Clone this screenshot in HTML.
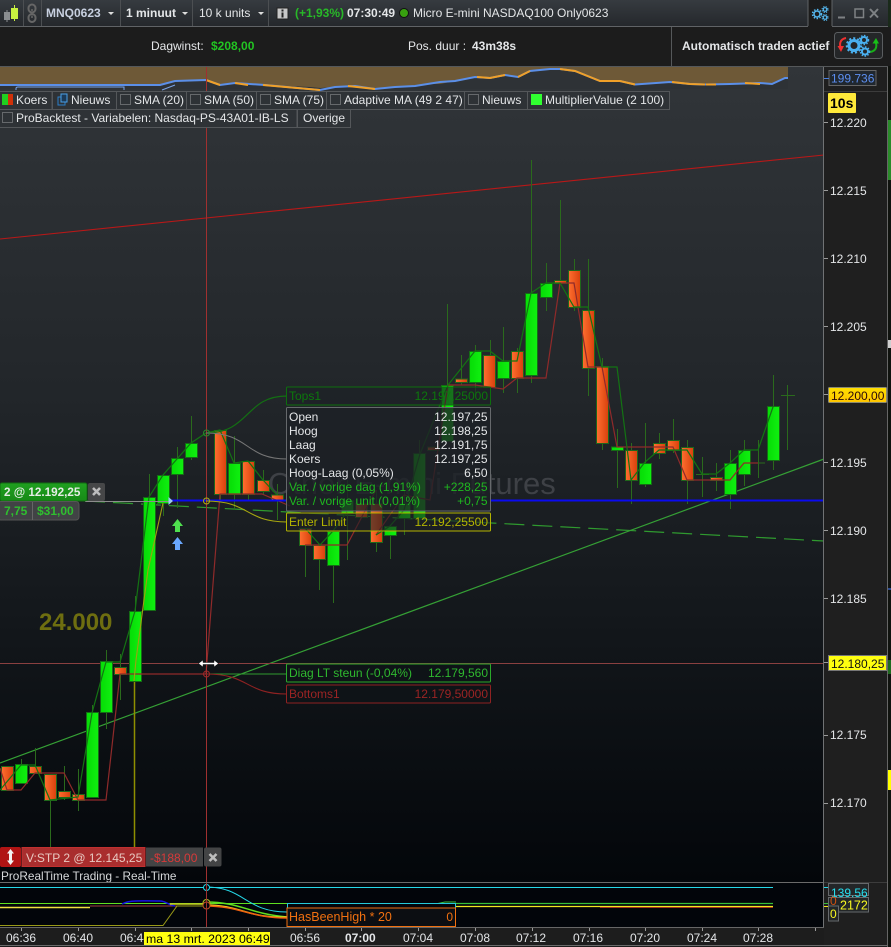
<!DOCTYPE html>
<html><head><meta charset="utf-8"><title>MNQ0623</title>
<style>
html,body{margin:0;padding:0;background:#1d1d1d;width:891px;height:947px;overflow:hidden}
svg{display:block;position:absolute;left:0;top:0}
text{font-family:"Liberation Sans",sans-serif;font-size:12px;fill:#e4e6e8}
.b{font-weight:bold}
.r{fill:url(#gr);stroke:#1f661a;stroke-width:1}
.g{fill:url(#gg);stroke:#156c15;stroke-width:1}
.lb{fill:#2e3236;stroke:#54575a;stroke-width:1}
.cb{fill:none;stroke:#66696c}
.m{text-anchor:end}
.tick{stroke:#9a9a9a;stroke-width:1}
</style></head><body>
<svg width="891" height="947" viewBox="0 0 891 947" xmlns="http://www.w3.org/2000/svg">
<defs>
<linearGradient id="gr" x1="0" x2="1" y1="0" y2="0"><stop offset="0" stop-color="#ff6f30"/><stop offset="1" stop-color="#d8400c"/></linearGradient>
<linearGradient id="gg" x1="0" x2="1" y1="0" y2="0"><stop offset="0" stop-color="#06dc06"/><stop offset="1" stop-color="#10f010"/></linearGradient>
<linearGradient id="bg" x1="0" x2="0" y1="0" y2="1"><stop offset="0" stop-color="#313539"/><stop offset=".4" stop-color="#22262a"/><stop offset=".7" stop-color="#12161a"/><stop offset="1" stop-color="#03060a"/></linearGradient>
<linearGradient id="top" x1="0" x2="0" y1="0" y2="1"><stop offset="0" stop-color="#363b40"/><stop offset="1" stop-color="#24272b"/></linearGradient>
<linearGradient id="gl" x1="0" x2="0" y1="0" y2="1"><stop offset="0" stop-color="#20a020"/><stop offset="1" stop-color="#178a17"/></linearGradient>
<linearGradient id="rl" x1="0" x2="0" y1="0" y2="1"><stop offset="0" stop-color="#c02020"/><stop offset="1" stop-color="#8f1f1f"/></linearGradient>
<linearGradient id="yl" x1="0" x2="0" y1="0" y2="1"><stop offset="0" stop-color="#ffe000"/><stop offset="1" stop-color="#ffc400"/></linearGradient>
</defs>

<!-- base -->
<rect width="891" height="947" fill="#1d1d1d"/>

<!-- chart bg -->
<rect x="0" y="67" width="824" height="816" fill="url(#bg)"/>

<!-- mini chart strip -->
<rect x="0" y="67" width="788" height="22" fill="#6e5937"/>
<path d="M0 86H160L175 81.500 206 80 220 85 235 83 265 85 310 87 320 88 335 87 355 86 375 89 395 87 415 86 425 84 440 84 475 77 490 78 505 75 518 77 530 71 550 69 560 69 575 71 600 81 620 81 635 84.500 670 82 690 84 705 84.500 730 84 760 83 772 84 785 78 788 78V89H0Z" fill="#2e3236"/>
<path d="M0 85H160L175 81 206 80 220 85 235 83 265 85 320 90 335 87 355 86 375 89 395 87 415 86 440 82 455 81 475 77 490 78 505 75 518 77 530 71 550 69 560 69 575 71 600 81 620 81 635 84.500 670 82 690 84 705 84.500 730 84 760 83 772 84 785 78 788 78" fill="none" stroke="#5b8fe8" stroke-width="2"/>
<path d="M206 80L220 85M235 83L248 85M263 85L320 90M348 86L375 89M477 77L490 78 505 75M518 77L530 71M560 69L575 71 600 81 620 81 635 84.500M672 82L690 84 705 84.500M706 84.500H716M745 83L760 84" fill="none" stroke="#f0a028" stroke-width="2"/>
<path d="M16 90V88.500Q16 87 18 87H124V90M162 90L175 85" fill="none" stroke="#7aa4e8" stroke-width="1"/>

<!-- watermark -->
<text x="268" y="494" style="font-size:31px;fill:#3e4146">Other E-mini Futures</text>

<!-- trend lines under -->
<path d="M0 239L824 155" stroke="#b81818" stroke-width="1.100" fill="none"/>
<path d="M85 501L824 541" stroke="#2f9a2f" stroke-width="1.200" fill="none" stroke-dasharray="20 8"/>
<path d="M0 763L824 459" stroke="#35a035" stroke-width="1.200" fill="none"/>
<path d="M0 663.500H824" stroke="#8a4040" stroke-width="1"/>
<path d="M134.500 681V847" stroke="#8f8f00" stroke-width="1.500"/>

<!-- wicks -->
<path d="M7.500 790V766M21.500 759V783M35.500 748V773M50.500 800V847M64.500 766V800M78.500 769V811M92.500 705V730M106.500 650V729M120.500 654V700M135.500 596V611M149.500 474V497M163.500 474V516M177.500 447V508M191.500 416V460M220.500 430V500M234.500 436V510M248.500 461V500M263.500 470V495M277.500 484V520M305.500 545V577M319.500 559V590M333.500 565V603M347.500 480V560M376.500 490V552M390.500 535V559M404.500 490V535M419.500 440V525M447.500 304V415M461.500 355V385M475.500 345V395M490.500 340V396M503.500 327V393M517.500 348V393M531.500 160V383M546.500 263V311M560.500 200V283M574.500 259V311M588.500 259V396M602.500 358V450M617.500 429V488M631.500 443V504M645.500 423V487M659.500 433V459M673.500 419V453M687.500 440V504M702.500 457V497M716.500 463V491M730.500 450V509M744.500 440V486M758.500 440V478M773.500 375V470M787.500 385V450M752 463H765M781 395.500H795M696 474.500H709" stroke="#2a6a1c" stroke-width="1" fill="none"/>

<!-- candles -->
<rect class="r" x="1.500" y="766.500" width="12" height="24"/>
<rect class="g" x="15.500" y="764.500" width="12" height="19"/>
<rect class="r" x="29.500" y="766.500" width="12" height="7"/>
<rect class="r" x="44.500" y="774.500" width="12" height="26"/>
<rect class="r" x="58.500" y="791.500" width="12" height="6"/>
<rect class="r" x="72.500" y="794.500" width="12" height="6"/>
<rect class="g" x="86.500" y="712.500" width="12" height="85"/>
<rect class="g" x="100.500" y="661.500" width="12" height="51"/>
<rect class="r" x="114.500" y="667.500" width="12" height="7"/>
<rect class="g" x="129.500" y="611.500" width="12" height="70"/>
<rect class="g" x="143.500" y="497.500" width="12" height="113"/>
<rect class="g" x="157.500" y="475.500" width="12" height="28"/>
<rect class="g" x="171.500" y="458.500" width="12" height="16"/>
<rect class="g" x="185.500" y="443.500" width="12" height="14"/>
<rect class="r" x="214.500" y="430.500" width="12" height="64"/>
<rect class="g" x="228.500" y="463.500" width="12" height="31"/>
<rect class="r" x="242.500" y="461.500" width="12" height="33"/>
<rect class="r" x="257.500" y="480.500" width="12" height="11"/>
<rect class="r" x="271.500" y="495" width="12" height="5"/>
<rect class="r" x="299.500" y="528.500" width="12" height="17"/>
<rect class="r" x="313.500" y="545.500" width="12" height="14"/>
<rect class="g" x="327.500" y="531.500" width="12" height="34"/>
<rect class="g" x="341.500" y="500.500" width="12" height="13"/>
<rect class="r" x="355.500" y="503.500" width="12" height="14"/>
<rect class="r" x="370.500" y="503.500" width="12" height="39"/>
<rect class="g" x="384.500" y="526.500" width="12" height="9"/>
<rect class="g" x="398.500" y="503.500" width="12" height="15"/>
<rect class="g" x="413.500" y="453.500" width="12" height="65"/>
<rect class="r" x="427.500" y="447" width="12" height="3.500"/>
<rect class="g" x="441.500" y="385.500" width="12" height="56"/>
<rect class="r" x="455.500" y="379" width="12" height="3.500"/>
<rect class="g" x="469.500" y="351.500" width="12" height="31"/>
<rect class="r" x="483.500" y="355.500" width="12" height="32"/>
<rect class="g" x="497.500" y="361.500" width="12" height="17"/>
<rect class="r" x="511.500" y="351.500" width="12" height="27"/>
<rect class="g" x="525.500" y="293.500" width="12" height="82"/>
<rect class="g" x="540.500" y="283.500" width="12" height="14"/>
<rect class="r" x="554.500" y="280.500" width="12" height="3"/>
<rect class="r" x="568.500" y="270.500" width="12" height="37"/>
<rect class="r" x="582.500" y="310.500" width="12" height="58"/>
<rect class="r" x="596.500" y="366.500" width="12" height="77"/>
<rect class="g" x="611.500" y="447" width="12" height="3.500"/>
<rect class="r" x="625.500" y="450.500" width="12" height="30"/>
<rect class="g" x="639.500" y="463.500" width="12" height="21"/>
<rect class="r" x="653.500" y="443.500" width="12" height="10"/>
<rect class="r" x="667.500" y="440.500" width="12" height="10"/>
<rect class="r" x="681.500" y="447.500" width="12" height="33"/>
<rect class="r" x="710.500" y="477.500" width="12" height="3"/>
<rect class="g" x="724.500" y="463.500" width="12" height="31"/>
<rect class="g" x="738.500" y="450.500" width="12" height="24"/>
<rect class="g" x="767.500" y="406.500" width="12" height="54"/>

<!-- red low line -->
<path d="M0 768L7 790H21L35 773H64L78 800H106L120 674H206L220 494H262L290 506M305 545L319 545H347L376 490M376 535L404 495 430 500 448 385H475L503 389 517 378H546L560 283H574L588 367 602 367 617 447H673L687 480H730L744 463H758" fill="none" stroke="#8f2a2a" stroke-width="1.200"/>
<!-- green high line -->
<path d="M0 790L21 765H35L50 800 78 797 92 713 106 662H120L135 611 149 497 163 475 177 459 191 443 206 433 220 430 234 463 248 461 263 480 277 495M305 528L320 545 333 531 347 512M376 535L390 526 404 510 420 454 448 385 475 351 490 351 503 361H517L531 293 546 283H560L574 307 588 307 602 367H617L631 480 645 462 659 450H673L687 450 702 474H716L730 463 744 450H758L773 407" fill="none" stroke="#137313" stroke-width="1.200"/>
<!-- yellow order line -->
<path d="M163 503L148 570 136 660 134 681" fill="none" stroke="#a0a010" stroke-width="1.100"/>

<!-- price line -->
<path d="M85 501.500H170" stroke="#8c8c8c" stroke-width="1"/>
<path d="M170 500.500H287M490 500.500H824" stroke="#0a0af0" stroke-width="2"/>
<path d="M168.500 497V505L173 501Z" fill="#9cc8f0"/>

<!-- arrows -->
<path d="M177.500 519L183 526H180V532H175V526H172Z" fill="#4fe04f"/>
<path d="M177.500 537L183 544H180V550H175V544H172Z" fill="#6aa8ff"/>

<!-- crosshair -->
<path d="M206.500 67V934" stroke="#a03030" stroke-width="1" />
<path d="M206 674H287" stroke="#2f9a2f" fill="none" stroke-width="1"/>
<path d="M206 433C250 433 245 396 287 396" stroke="#136f13" fill="none" stroke-width="1.200"/>
<path d="M206 433C250 433 245 459 287 459" stroke="#777" fill="none" stroke-width="1"/>
<path d="M206 501C250 501 245 522 287 522" stroke="#a8a810" fill="none" stroke-width="1.100"/>
<path d="M206 674C250 674 245 694 287 694" stroke="#8f2222" fill="none" stroke-width="1.100"/>
<circle cx="206.500" cy="433" r="3" fill="none" stroke="#2a8a2a"/>
<circle cx="206.500" cy="501" r="3" fill="none" stroke="#b0b010"/>
<circle cx="206.500" cy="674" r="3" fill="none" stroke="#a02828"/>

<!-- resize cursor -->
<path d="M198.500 663.500L203 660V662.500H214V660L218.500 663.500 214 667V664.500H203V667Z" fill="#fff" stroke="#111" stroke-width=".5"/>

<!-- 24.000 -->
<text x="39" y="630" class="b" style="font-size:24px;fill:#6e6e10">24.000</text>

<!-- order tags -->
<rect x="0" y="483" width="87" height="18" rx="2" fill="url(#gl)" stroke="#116e11"/>
<text x="4" y="496" class="b" style="fill:#e6ece6;font-size:11.700px">2 @ 12.192,25</text>
<rect x="88" y="483" width="17" height="18" rx="2" fill="#464748"/>
<path d="M93 488L100 495M100 488L93 495" stroke="#bdbdbd" stroke-width="2.600"/>
<rect x="-2" y="501.500" width="81" height="18.500" rx="3" fill="#414345" stroke="#555"/>
<path d="M32.500 502V520" stroke="#666"/>
<text x="4" y="515" class="b" style="fill:#2fbf2f">7,75</text>
<text x="37" y="515" class="b" style="fill:#2fbf2f">$31,00</text>

<rect x="0" y="847" width="21" height="20" rx="2" fill="#b01414"/>
<path d="M10.500 849L14 853.500H12V860.500H14L10.500 865 7 860.500H9V853.500H7Z" fill="#f2f2f2"/>
<rect x="22" y="847.500" width="123" height="19" fill="#a92e2e" stroke="#c23030"/>
<text x="26" y="862" style="fill:#e8c8c0">V:STP  2 @ 12.145,25</text>
<rect x="146" y="847.500" width="57" height="19" fill="#434445" />
<text x="150" y="862" style="fill:#d83a3a">-$188,00</text>
<rect x="204" y="847.500" width="17.500" height="19" rx="2" fill="#434445"/>
<path d="M209.500 854L216.500 861M216.500 854L209.500 861" stroke="#bdbdbd" stroke-width="2.600"/>
<text x="1" y="880" style="font-size:11.800px;fill:#d6d8da">ProRealTime Trading - Real-Time</text>

<!-- tooltip labels -->
<rect x="286.500" y="387" width="204" height="18" rx="1" fill="#1d2226" fill-opacity=".6" stroke="#0d6e0d"/>
<text x="289" y="400" style="fill:#0c780c">Tops1</text>
<text x="488" y="400" class="m" style="fill:#0c780c">12.197,25000</text>

<rect x="286.500" y="407.500" width="204" height="103.500" rx="1" fill="#1d2125" fill-opacity=".8" stroke="#66696c"/>
<text x="289" y="421">Open</text><text x="487.500" y="421" class="m">12.197,25</text>
<text x="289" y="435">Hoog</text><text x="487.500" y="435" class="m">12.198,25</text>
<text x="289" y="449">Laag</text><text x="487.500" y="449" class="m">12.191,75</text>
<text x="289" y="463">Koers</text><text x="487.500" y="463" class="m">12.197,25</text>
<text x="289" y="477">Hoog-Laag (0,05%)</text><text x="487.500" y="477" class="m">6,50</text>
<text x="289" y="491" style="fill:#1fb81f">Var. / vorige dag (1,91%)</text><text x="487.500" y="491" class="m" style="fill:#1fb81f">+228,25</text>
<text x="289" y="505" style="fill:#1fb81f">Var. / vorige unit (0,01%)</text><text x="487.500" y="505" class="m" style="fill:#1fb81f">+0,75</text>

<rect x="286.500" y="513" width="204" height="18" rx="1" fill="#1c2024" fill-opacity=".6" stroke="#b4b400"/>
<text x="289" y="526" style="fill:#b4b400">Enter Limit</text>
<text x="488" y="526" class="m" style="fill:#b4b400">12.192,25500</text>

<rect x="286.500" y="664" width="204" height="18" rx="1" fill="#0e1317" stroke="#2aa82a"/>
<text x="289" y="677" style="fill:#2fb82f">Diag LT steun (-0,04%)</text>
<text x="488" y="677" class="m" style="fill:#2fb82f">12.179,560</text>
<rect x="286.500" y="685" width="204" height="18" rx="1" fill="#0e1317" stroke="#8f2222"/>
<text x="289" y="698" style="fill:#9c2424">Bottoms1</text>
<text x="488" y="698" class="m" style="fill:#9c2424">12.179,50000</text>

<!-- legend row 1 -->
<rect class="lb" x="-1" y="91.500" width="53" height="18"/>
<rect x="2" y="94" width="6" height="11" fill="#20d020"/><rect x="8" y="94" width="5" height="11" fill="#d03008"/>
<text x="16" y="104">Koers</text>
<rect class="lb" x="52.500" y="91.500" width="64" height="18"/>
<rect x="58" y="97" width="7" height="8" fill="none" stroke="#2b7fc9"/><rect x="61" y="94" width="6" height="8" fill="#1b3a58" stroke="#4aa0e8"/>
<text x="71" y="104">Nieuws</text>
<rect class="lb" x="116.500" y="91.500" width="70" height="18"/>
<rect class="cb" x="120.500" y="94.500" width="10" height="10"/><text x="134" y="104">SMA (20)</text>
<rect class="lb" x="186.500" y="91.500" width="70" height="18"/>
<rect class="cb" x="190.500" y="94.500" width="10" height="10"/><text x="204" y="104">SMA (50)</text>
<rect class="lb" x="256.500" y="91.500" width="70" height="18"/>
<rect class="cb" x="260.500" y="94.500" width="10" height="10"/><text x="274" y="104">SMA (75)</text>
<rect class="lb" x="326.500" y="91.500" width="138" height="18"/>
<rect class="cb" x="330.500" y="94.500" width="10" height="10"/><text x="344" y="104">Adaptive MA (49 2 47)</text>
<rect class="lb" x="464.500" y="91.500" width="63" height="18"/>
<rect class="cb" x="468.500" y="94.500" width="10" height="10"/><text x="482" y="104">Nieuws</text>
<rect class="lb" x="527.500" y="91.500" width="142" height="18"/>
<rect x="531" y="94" width="11" height="11" fill="#30ff30"/><text x="545" y="104">MultiplierValue (2 100)</text>
<!-- legend row 2 -->
<rect class="lb" x="-1" y="109.500" width="298" height="18"/>
<rect class="cb" x="2.500" y="112.500" width="10" height="10"/>
<text x="16" y="122">ProBacktest - Variabelen: Nasdaq-PS-43A01-IB-LS</text>
<rect class="lb" x="297.500" y="109.500" width="53" height="18"/>
<text x="303" y="122">Overige</text>

<!-- indicator panel -->
<rect x="0" y="883" width="824" height="45" fill="#02050a"/>
<path d="M0 882.500H824" stroke="#6a6a6a"/>
<path d="M0 887.500H773" stroke="#25d8e8" stroke-width="1"/>
<path d="M0 903.500H287" stroke="#5fe020" stroke-width="1"/>
<path d="M0 907.500H90" stroke="#f0e040" stroke-width="1.400"/>
<path d="M90 906H206" stroke="#a04040" stroke-width="1"/>
<path d="M122 904C130 900 135 901 160 901 166 901 168 905 175 906" stroke="#1414e8" fill="none" stroke-width="1.500"/>
<path d="M0 925.500H163L177 906H206" stroke="#9a9a18" fill="none" stroke-width="1"/>
<path d="M170 904H206" stroke="#c8d020" stroke-width="1.500"/>
<path d="M206 887C245 887 245 912 287 912" stroke="#25d8e8" fill="none"/>
<path d="M206 902C240 902 250 914 287 917" stroke="#60e020" fill="none" stroke-width="1.500"/>
<path d="M206 905C240 905 250 919 287 917" stroke="#f0d020" fill="none" stroke-width="1.500"/>
<path d="M206 906C240 906 250 918 287 918" stroke="#f06010" fill="none" stroke-width="1.500"/>
<path d="M456 903.500H773" stroke="#38c038" stroke-width="1.300"/>
<path d="M456 906.500H773" stroke="#f0e820" stroke-width="1.300"/>
<path d="M600 907.500H773" stroke="#d04020" stroke-width=".8"/>
<path d="M438 903.500L445 902H456" stroke="#38c038" fill="none"/>
<circle cx="206.500" cy="887.500" r="3" fill="#02050a" stroke="#25d8e8"/>
<circle cx="206.500" cy="903" r="3.500" fill="#02050a" stroke="#b0c020"/>
<circle cx="206.500" cy="905.500" r="3.500" fill="#02050a" stroke="#c05020"/>
<path d="M206.500 883V934" stroke="#a03030"/>
<rect x="287.500" y="903.500" width="168" height="5" fill="#02050a" stroke="#25c8d8"/>
<rect x="287" y="908" width="168.500" height="18.500" fill="#0c0e12" stroke="#f07010"/>
<text x="289" y="921" style="fill:#f07010;font-size:12.500px">HasBeenHigh * 20</text>
<text x="453" y="921" class="m" style="fill:#f07010">0</text>

<!-- axis structure -->
<path d="M823.500 27V928" stroke="#707274"/>
<rect x="824" y="67" width="64" height="880" fill="#1f1f1f"/>
<path d="M823.500 67V928" stroke="#707274"/>
<path d="M824 91.500H888M824 882.500H888" stroke="#3c3c3c"/>
<path d="M887.500 27V947" stroke="#666"/>
<rect x="888" y="27" width="3" height="920" fill="#10130f"/>
<rect x="888" y="120" width="3" height="60" fill="#2a8a2a"/>
<rect x="888" y="340" width="3" height="8" fill="#cfcfcf"/>
<rect x="888" y="660" width="3" height="14" fill="#1f6a1f"/>
<rect x="888" y="770" width="3" height="20" fill="#ffff00"/>
<rect x="888" y="588" width="3" height="2" fill="#2a4a90"/>

<!-- price axis -->
<path class="tick" d="M824 122.500h4M824 190.500h4M824 258.500h4M824 326.500h4M824 394.500h4M824 462.500h4M824 530.500h4M824 598.500h4M824 662.500h4M824 735.500h4M824 803.500h4"/>
<text x="830" y="127">12.220</text><text x="830" y="195">12.215</text><text x="830" y="263">12.210</text><text x="830" y="331">12.205</text><text x="830" y="467">12.195</text><text x="830" y="535">12.190</text><text x="830" y="603">12.185</text><text x="830" y="739">12.175</text><text x="830" y="807">12.170</text>

<rect x="828.500" y="387.500" width="58" height="15" rx="1" fill="url(#yl)" stroke="#8a8a70"/>
<text x="831" y="400" style="fill:#2a0808">12.200,00</text>
<rect x="828.500" y="655.500" width="58" height="15" fill="#ffff10" stroke="#777"/>
<text x="831" y="668" style="fill:#111">12.180,25</text>

<rect x="829" y="70.500" width="47" height="15" fill="#20272e" stroke="#666"/>
<path d="M824 78.500H829" stroke="#4a80e0"/>
<text x="831" y="82.500" style="fill:#5c8ef0">199.736</text>
<rect x="828" y="93" width="28" height="20" rx="1" fill="#ffe93a"/>
<text x="830" y="108" class="b" style="fill:#000;font-size:14px">10s</text>

<!-- bottom panel labels -->
<path d="M824 887.500H829" stroke="#25d8e8"/>
<path d="M824 903.500H829" stroke="#38c038"/><path d="M824 906.500H829" stroke="#f0e820"/>
<rect x="828.500" y="883.500" width="40" height="12" fill="#232628" stroke="#66696c"/>
<text x="831" y="897" style="fill:#25e0f0">139.56</text>
<rect x="828.500" y="897.500" width="40" height="14.500" fill="#232628" stroke="#66696c"/>
<text x="840" y="909.500" style="fill:#f8f820;font-size:12.500px">2172</text>
<text x="830" y="905" style="fill:#d05010">0</text>
<rect x="828.500" y="906" width="10" height="15" fill="#232628" stroke="#66696c"/>
<text x="830" y="918" style="fill:#f8f820">0</text>

<!-- time axis -->
<rect x="0" y="928" width="824" height="19" fill="#1d1d1d"/>
<path d="M0 927.500H824" stroke="#666"/>
<path d="M0 945.500H888" stroke="#6a6a6a"/>
<path class="tick" d="M21.500 928v3M78.500 928v3M135.500 928v3M191.500 928v3M248.500 928v3M305.500 928v3M361.500 928v3M418.500 928v3M475.500 928v3M532.500 928v3M589.500 928v3M645.500 928v3M702.500 928v3M758.500 928v3M815.500 928v3"/>
<text x="6" y="942">06:36</text><text x="63" y="942">06:40</text><text x="120" y="942">06:44</text>
<text x="290" y="942">06:56</text><text x="345" y="942" class="b">07:00</text><text x="403" y="942">07:04</text><text x="460" y="942">07:08</text><text x="516" y="942">07:12</text><text x="573" y="942">07:16</text><text x="630" y="942">07:20</text><text x="687" y="942">07:24</text><text x="743" y="942">07:28</text>
<rect x="144" y="932" width="126" height="13" fill="#ffff10"/>
<text x="146" y="943" style="fill:#000;font-size:12.300px">ma 13 mrt. 2023 06:49</text>

<!-- panel 2 -->
<rect x="0" y="27" width="891" height="39" fill="#1c1c1c"/>
<path d="M0 66.500H888" stroke="#55585a"/>
<path d="M671.500 27V66" stroke="#55585a"/>
<text x="151" y="50">Dagwinst:</text>
<text x="211" y="50" class="b" style="fill:#22c422">$208,00</text>
<text x="408" y="50">Pos. duur :</text>
<text x="472" y="50" class="b">43m38s</text>
<text x="682" y="50" class="b">Automatisch traden actief</text>
<rect x="834.500" y="32.500" width="48" height="26" rx="3" fill="#242628" stroke="#5a5d60"/>
<path d="M846 38C840 39 839 44 841 49" fill="none" stroke="#f03030" stroke-width="2"/><path d="M837.500 46L844 46 841 52Z" fill="#f03030"/>
<path d="M870 52C876 51 877 47 876 43" fill="none" stroke="#18b018" stroke-width="2"/><path d="M872.500 43.500L879 43.500 876 38Z" fill="#18c018"/>
<circle cx="854" cy="45.500" r="5" fill="none" stroke="#4ab0f0" stroke-width="3"/><circle cx="854" cy="45.500" r="7" fill="none" stroke="#4ab0f0" stroke-width="2.500" stroke-dasharray="2 2"/>
<circle cx="864" cy="40" r="3" fill="none" stroke="#4ab0f0" stroke-width="2"/><circle cx="864" cy="40" r="4.500" fill="none" stroke="#4ab0f0" stroke-width="1.500" stroke-dasharray="1.500 1.500"/>
<circle cx="865" cy="51.500" r="3" fill="none" stroke="#4ab0f0" stroke-width="2"/><circle cx="865" cy="51.500" r="4.500" fill="none" stroke="#4ab0f0" stroke-width="1.500" stroke-dasharray="1.500 1.500"/>

<!-- top bar -->
<rect x="0" y="0" width="808" height="27" fill="url(#top)"/>
<rect x="808" y="0" width="83" height="27" fill="url(#top)"/>
<rect x="808" y="0" width="24" height="27" fill="#1c1c1c"/>
<path d="M0 26.500H808M832 26.500H891" stroke="#606366"/>
<path d="M808 0V26M832 0V26" stroke="#606366"/>
<path d="M23.500 0V26M41.500 0V26M120.500 0V26M192.500 0V26M268.500 0V26" stroke="#4c4f52"/>
<!-- candle icon -->
<rect x="4" y="12" width="6" height="8" fill="#8a8d90"/><path d="M7 10V22" stroke="#8a8d90"/>
<rect x="11" y="8" width="7" height="11" fill="#c8f040"/><path d="M14.500 5V21" stroke="#c8f040"/>
<!-- link icon -->
<rect x="28.500" y="4.500" width="7" height="8" rx="3.500" fill="none" stroke="#666" stroke-width="2"/>
<rect x="28.500" y="14" width="7" height="8" rx="3.500" fill="none" stroke="#666" stroke-width="2"/>
<path d="M32 9V11M32 15.500V18" stroke="#666" stroke-width="1.500"/>
<text x="46" y="17" class="b" style="fill:#c8d0e0">MNQ0623</text>
<path d="M108 12H114L111 15Z" fill="#ddd"/>
<text x="126" y="17" class="b">1 minuut</text>
<path d="M182 12H188L185 15Z" fill="#ddd"/>
<text x="199" y="17">10 k units</text>
<path d="M258 12H264L261 15Z" fill="#ddd"/>
<rect x="277" y="8" width="11" height="11" fill="#c8c8c8" stroke="#222"/>
<rect x="281.500" y="9.500" width="2" height="2" fill="#222"/><rect x="281.500" y="12.500" width="2" height="5" fill="#222"/>
<text x="295" y="17" class="b" style="fill:#28b828">(+1,93%)</text>
<text x="347" y="17" class="b">07:30:49</text>
<circle cx="404" cy="13" r="4.500" fill="#38a010" stroke="#111"/>
<text x="413" y="17">Micro E-mini NASDAQ100 Only0623</text>
<!-- settings gears -->
<circle cx="817" cy="14" r="3" fill="none" stroke="#55b8f0" stroke-width="1.500"/><circle cx="817" cy="14" r="4.500" fill="none" stroke="#55b8f0" stroke-width="1.500" stroke-dasharray="1.500 1.500"/>
<circle cx="825" cy="9.500" r="1.800" fill="none" stroke="#55b8f0" stroke-width="1.200"/><circle cx="825" cy="9.500" r="3" fill="none" stroke="#55b8f0" stroke-width="1" stroke-dasharray="1.200 1.200"/>
<circle cx="825" cy="17.500" r="1.800" fill="none" stroke="#55b8f0" stroke-width="1.200"/><circle cx="825" cy="17.500" r="3" fill="none" stroke="#55b8f0" stroke-width="1" stroke-dasharray="1.200 1.200"/>
<!-- window controls -->
<path d="M838 17.500H845" stroke="#7e8184" stroke-width="2"/>
<rect x="855" y="9" width="8.500" height="8.500" fill="none" stroke="#7e8184" stroke-width="1.500"/>
<path d="M870 9L878 17.500M878 9L870 17.500" stroke="#7e8184" stroke-width="2"/>
<rect x="888" y="0" width="3" height="27" fill="#1a2a1a"/>
</svg>
</body></html>
